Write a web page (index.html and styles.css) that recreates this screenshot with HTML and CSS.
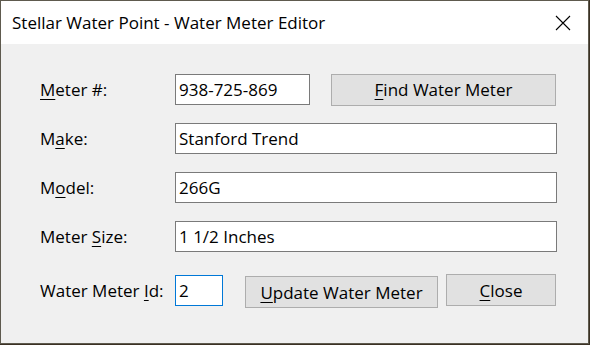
FILE: index.html
```html
<!DOCTYPE html>
<html lang="en">
	<head>
		<meta charset="UTF-8">
		<link rel="stylesheet" href="styles.css">
	</head>
	<body>
		<div class="window">
			<div class="titleBar">
				<span class="titleText">Stellar Water Point - Water Meter Editor</span>
				<svg class="closeIcon" width="16" height="16" viewBox="0 0 16 16">
					<path d="M1 1 L15 15 M15 1 L1 15" stroke="#000" stroke-width="1.1" fill="none"/>
				</svg>
			</div>
			<div class="dialogBody">
				<div class="row">
					<label class="label"><u>M</u>eter #:</label>
					<div class="textBox meterBox">938-725-869</div>
					<button class="button findButton"><u>F</u>ind Water Meter</button>
				</div>
				<div class="row">
					<label class="label">M<u>a</u>ke:</label>
					<div class="textBox wideBox">Stanford Trend</div>
				</div>
				<div class="row">
					<label class="label">M<u>o</u>del:</label>
					<div class="textBox wideBox">266G</div>
				</div>
				<div class="row">
					<label class="label">Meter <u>S</u>ize:</label>
					<div class="textBox wideBox">1 1/2 Inches</div>
				</div>
				<div class="row lastRow">
					<label class="label">Water Meter <u>I</u>d:</label>
					<div class="textBox idBox">2</div>
					<button class="button updateButton"><u>U</u>pdate Water Meter</button>
					<button class="button closeButton"><u>C</u>lose</button>
				</div>
			</div>
		</div>
	</body>
</html>
```

FILE: styles.css
```css
body {
	margin: 0;
	background-color: #3b3124;
	font-family: "Open Sans", "Noto Sans", sans-serif;
}

/*---------------------------WINDOW---------------------------*/
.window {
	width: 587px;
	height: 342px;
	border: 1px solid #5e5a4e;
	background-color: #f0f0f0;
}

.titleBar {
	height: 43px;
	background-color: #ffffff;
	display: flex;
	align-items: center;
	justify-content: space-between;
	padding: 0 17px 0 11px;
}

.titleText {
	font-size: 17px;
	color: #000;
}

.closeIcon {
	display: block;
	margin-top: 1px;
}

/*---------------------------FORM---------------------------*/
.dialogBody {
	padding: 21px 0 0 39px;
	font-size: 17px;
}

.row {
	height: 49px;
	display: flex;
	align-items: center;
}

.lastRow {
	margin-top: 5px;
}

.label {
	width: 135px;
	color: #000;
}

.label u, .button u {
	text-decoration-thickness: 1px;
	text-underline-offset: 3px;
}

.textBox {
	box-sizing: border-box;
	height: 31px;
	border: 1px solid #7a7a7a;
	background-color: #fff;
	padding: 0 3px;
	display: flex;
	align-items: center;
	color: #000;
}

.meterBox {
	width: 135px;
}

.wideBox {
	width: 382px;
}

.idBox {
	width: 48px;
	border-color: #0078d7;
	margin-right: 22px;
}

.button {
	box-sizing: border-box;
	height: 32px;
	background-color: #e1e1e1;
	border: 1px solid #adadad;
	font-family: inherit;
	font-size: 17px;
	color: #000;
	padding: 0;
	text-align: center;
}

.findButton {
	width: 225px;
	margin-left: 21px;
}

.updateButton {
	width: 193px;
	margin-top: 3px;
}

.closeButton {
	width: 110px;
	margin-left: 8px;
	margin-bottom: 1px;
}
```
